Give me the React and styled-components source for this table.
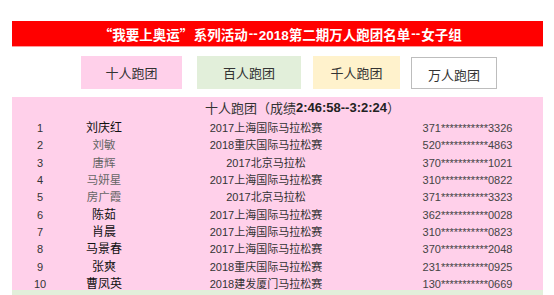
import React from 'react';
import styled, { createGlobalStyle } from 'styled-components';

const Global = createGlobalStyle`
  body {
    margin: 0;
    background: #fff;
    font-family: "Liberation Sans", "Noto Sans CJK SC", sans-serif;
  }
`;

const Page = styled.div`
  width: 554px;
  height: 295px;
  overflow: hidden;
  padding: 21px 11px 0 12px;
  box-sizing: border-box;
`;

const Banner = styled.div`
  height: 26px;
  background: #ff0000;
  border-bottom: 1px solid #ff9a9a;
  box-sizing: border-box;
  color: #fff;
  font-weight: bold;
  font-size: 13.5px;
  display: flex;
  align-items: center;
  justify-content: center;
  padding-left: 5px;
`;

const Quote = styled.span`
  font-family: "Noto Sans CJK SC", sans-serif;
  display: inline-block;
  width: 14px;
  text-align: ${p => (p.open ? 'right' : 'left')};
`;

const Dash = styled.span`
  margin: 0 1px;
`;

const Tabs = styled.div`
  display: flex;
  margin: 9px 0 8px 69px;
  height: 33px;
`;

const Tab = styled.div`
  width: ${p => p.w}px;
  margin-right: ${p => p.gap || 0}px;
  background: ${p => p.bg};
  border: ${p => (p.outline ? '1px solid #bdbdbd' : 'none')};
  margin-top: ${p => (p.outline ? 1 : 0)}px;
  box-sizing: border-box;
  display: flex;
  align-items: center;
  justify-content: center;
  font-size: 13px;
  color: #333;
  padding-top: ${p => (p.outline ? 3 : 0)}px;
`;

const Panel = styled.div`
  background: #ffd0ea;
`;

const Title = styled.div`
  height: 20px;
  display: flex;
  align-items: center;
  justify-content: center;
  padding-left: 50px;
  font-size: 13px;
  color: #333;
  b {
    color: #222;
  }
`;

const Row = styled.div`
  display: grid;
  grid-template-columns: 56px 72px 252px 151px;
  height: 17.3px;
  align-items: center;
  padding-top: 5px;
  box-sizing: border-box;
  font-size: 11px;
  color: #333;
`;

const Cell = styled.div`
  text-align: center;
  line-height: 12px;
  white-space: nowrap;
`;

const Name = styled(Cell)`
  font-weight: normal;
  color: ${p => (p.light ? '#666' : '#111')};
  font-size: ${p => (p.light ? 11.5 : 12)}px;
`;

const Id = styled(Cell)`
  color: #444;
`;

const Next = styled.div`
  height: 10px;
  background: #e2efda;
`;

const rows = [
  [1, '刘庆红', '2017上海国际马拉松赛', '371***********3326'],
  [2, '刘敏', '2018重庆国际马拉松赛', '520***********4863', true],
  [3, '唐辉', '2017北京马拉松', '370***********1021', true],
  [4, '马妍星', '2017上海国际马拉松赛', '310***********0822', true],
  [5, '房广霞', '2017北京马拉松', '371***********3323', true],
  [6, '陈茹', '2017上海国际马拉松赛', '362***********0028'],
  [7, '肖晨', '2017上海国际马拉松赛', '310***********0823'],
  [8, '马景春', '2017上海国际马拉松赛', '370***********2048'],
  [9, '张爽', '2018重庆国际马拉松赛', '231***********0925'],
  [10, '曹凤英', '2018建发厦门马拉松赛', '130***********0669'],
];

export default function App() {
  return (
    <Page>
      <Global />
      <Banner>
        <Quote open>“</Quote>我要上奥运<Quote>”</Quote>系列活动<Dash>--</Dash>2018第二期万人跑团名单<Dash>--</Dash>女子组
      </Banner>
      <Tabs>
        <Tab w={101} gap={15} bg="#ffd0ea">十人跑团</Tab>
        <Tab w={104} gap={12} bg="#e2efda">百人跑团</Tab>
        <Tab w={87} gap={11} bg="#fff2cc">千人跑团</Tab>
        <Tab w={86} bg="#fff" outline>万人跑团</Tab>
      </Tabs>
      <Panel>
        <Title>
          十人跑团（成绩<b>2:46:58--3:2:24</b>）
        </Title>
        {rows.map(([n, name, race, id, light]) => (
          <Row key={n}>
            <Cell>{n}</Cell>
            <Name light={light}>{name}</Name>
            <Cell>{race}</Cell>
            <Id>{id}</Id>
          </Row>
        ))}
      </Panel>
      <Next />
    </Page>
  );
}
